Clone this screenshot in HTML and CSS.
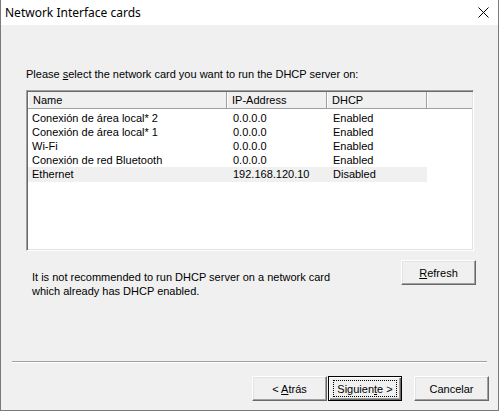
FILE: index.html
```html
<!DOCTYPE html>
<html>
<head>
<meta charset="utf-8">
<title>Network Interface cards</title>
<link rel="stylesheet" href="styles.css">
</head>
<body>
<div class="window">
  <div class="titlebar">
    <span class="title">Network Interface cards</span>
    <span class="close"><svg width="11" height="11" viewBox="0 0 11 11"><path d="M0.5 0.5 L10.5 10.5 M10.5 0.5 L0.5 10.5" stroke="#000" stroke-width="1" fill="none"/></svg></span>
  </div>
  <div class="content">
    <p class="prompt">Please <u>s</u>elect the network card you want to run the DHCP server on:</p>
    <div class="listbox">
      <div class="lv-header">
        <div class="hcell c-name">Name</div>
        <div class="hcell c-ip">IP-Address</div>
        <div class="hcell c-dhcp">DHCP</div>
        <div class="hcell c-fill"></div>
      </div>
      <div class="lv-row"><span class="cell c-name">Conexión de área local* 2</span><span class="cell c-ip">0.0.0.0</span><span class="cell c-dhcp">Enabled</span></div>
      <div class="lv-row"><span class="cell c-name">Conexión de área local* 1</span><span class="cell c-ip">0.0.0.0</span><span class="cell c-dhcp">Enabled</span></div>
      <div class="lv-row"><span class="cell c-name">Wi-Fi</span><span class="cell c-ip">0.0.0.0</span><span class="cell c-dhcp">Enabled</span></div>
      <div class="lv-row"><span class="cell c-name">Conexión de red Bluetooth</span><span class="cell c-ip">0.0.0.0</span><span class="cell c-dhcp">Enabled</span></div>
      <div class="lv-row selected"><span class="cell c-name">Ethernet</span><span class="cell c-ip">192.168.120.10</span><span class="cell c-dhcp">Disabled</span></div>
    </div>
    <div class="info-row">
      <p class="note">It is not recommended to run DHCP server on a network card<br>which already has DHCP enabled.</p>
      <button class="btn btn-refresh"><span><u>R</u>efresh</span></button>
    </div>
  </div>
  <div class="footer">
    <div class="separator"></div>
    <div class="buttons">
      <button class="btn"><span>&lt; <u>A</u>trás</span></button>
      <button class="btn btn-default"><span class="focus"><span>Siguien<u>t</u>e &gt;</span></span></button>
      <button class="btn btn-cancel"><span>Cancelar</span></button>
    </div>
  </div>
</div>
</body>
</html>
```

FILE: styles.css
```css
* { box-sizing: border-box; }
html, body { margin: 0; padding: 0; background: #f0f0f0; }
body { font-family: "Liberation Sans", Arial, sans-serif; font-size: 11px; color: #000; }

.window {
  width: 499px;
  height: 411px;
  display: flex;
  flex-direction: column;
  background: #f0f0f0;
  border-left: 1px solid #7a7a7a;
  border-right: 1px solid #7a7a7a;
  border-bottom: 1px solid #7a7a7a;
}

.titlebar {
  height: 25px;
  flex: none;
  background: #fff;
  display: flex;
  align-items: center;
  justify-content: space-between;
  padding: 0 9px 0 4px;
}
.title { font-family: "Noto Sans", "Open Sans", sans-serif; font-size: 12px; line-height: 16px; }
.close { display: flex; width: 11px; height: 11px; }

.content { padding: 43px 0 0 25px; }

.prompt { margin: 0; line-height: 13px; }
.prompt u, .btn u { text-decoration: underline; text-underline-offset: 1px; }

.listbox {
  margin-top: 9px;
  width: 448px;
  height: 161px;
  background: #fff;
  border: 1px solid;
  border-color: #a0a0a0 #fff #fff #a0a0a0;
  box-shadow: inset 1px 1px #696969, inset -1px -1px #e3e3e3;
  padding: 1px;
}

.lv-header { display: flex; height: 17px; }
.hcell {
  background: #f0f0f0;
  height: 17px;
  line-height: 16px;
  padding-left: 5px;
  border-right: 1px solid #a0a0a0;
  border-bottom: 1px solid #a0a0a0;
  box-shadow: inset 1px 0 #fff;
}
.hcell.c-fill { flex: 1; border-right: none; }

.c-name { width: 199px; flex: none; }
.c-ip { width: 100px; flex: none; }
.c-dhcp { width: 100px; flex: none; }

.lv-row { display: flex; height: 14px; line-height: 14px; width: 399px; }
.lv-header + .lv-row { margin-top: 2px; }
.lv-row .cell { padding-left: 4px; white-space: nowrap; }
.lv-row .c-ip, .lv-row .c-dhcp { padding-left: 6px; }
.lv-row.selected { background: #f0f0f0; height: 15px; }

.info-row {
  display: flex;
  justify-content: space-between;
  align-items: flex-start;
  width: 450px;
  margin-top: 9px;
}
.note { margin: 10px 0 0 6px; line-height: 14px; }

.btn {
  font-family: "Liberation Sans", Arial, sans-serif;
  font-size: 11px;
  color: #000;
  width: 75px;
  height: 25px;
  padding: 0;
  background: #f0f0f0;
  border: 1px solid;
  border-color: #fff #696969 #696969 #fff;
  box-shadow: inset -1px -1px #a0a0a0, inset 1px 1px #e3e3e3;
  display: flex;
  align-items: center;
  justify-content: center;
  white-space: pre;
}

.footer { margin-top: auto; padding: 0 0 9px 11px; }
.separator {
  width: 475px;
  height: 2px;
  border-top: 1px solid #a0a0a0;
  border-bottom: 1px solid #fff;
}
.buttons {
  display: flex;
  justify-content: flex-end;
  width: 477px;
  margin-top: 13px;
}
.btn-default {
  border: 1px solid #000;
  box-shadow: inset 1px 1px #fff, inset -1px -1px #696969, inset -2px -2px #a0a0a0;
  margin-left: 1px;
  width: 74px;
}
.focus {
  display: flex;
  align-items: center;
  justify-content: center;
  width: 64px;
  height: 17px;
  border: 1px dotted #000;
}
.btn-cancel { margin-left: 12px; }
```
